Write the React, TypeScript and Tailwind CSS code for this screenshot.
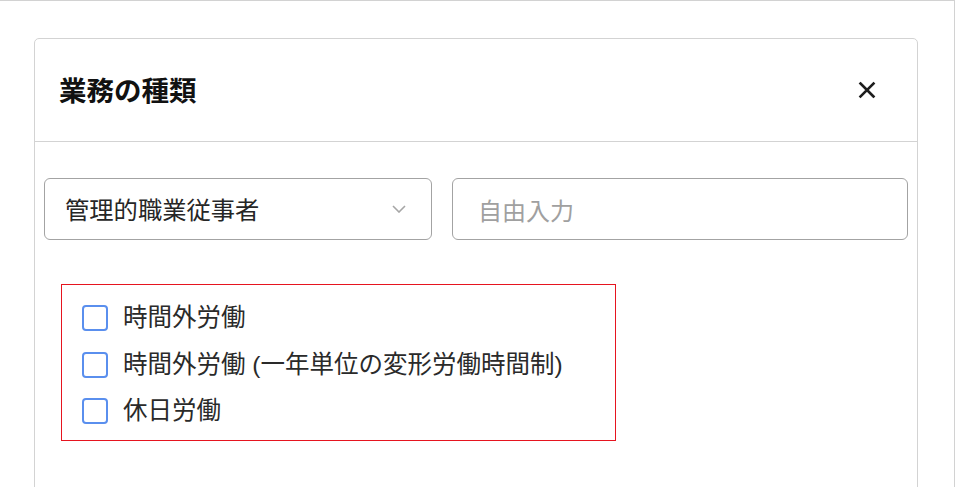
import React from 'react';

const OPTIONS = ['時間外労働', '時間外労働 (一年単位の変形労働時間制)', '休日労働'];

export default function App() {
  return (
    <div className="min-h-screen bg-white" style={{ fontFamily: '"Noto Sans CJK JP", "Noto Sans", sans-serif' }}>
      <div className="w-[955px] h-[487px] border-t-[1.5px] border-r border-[#d2d2d2] pt-[37px] pl-[34px] overflow-hidden">
        <div className="w-[884px] h-[500px] border border-[#d3d3d3] rounded-[5px] bg-white">
          {/* Header */}
          <div className="h-[103px] flex items-center justify-between pl-[24px] pr-[41px] border-b border-[#d3d3d3]">
            <h2 className="text-[27.5px] font-bold text-[#111] leading-none">業務の種類</h2>
            <button className="w-[18px] h-[18px] flex items-center justify-center">
              <svg width="18" height="18" viewBox="0 0 18 18" fill="none" stroke="#1e1e1e" strokeWidth="2.6" strokeLinecap="square">
                <path d="M2.5 2.5L15.5 15.5M15.5 2.5L2.5 15.5" />
              </svg>
            </button>
          </div>

          {/* Body */}
          <div className="px-[9px] pt-[36px]">
            <div className="flex gap-[20px]">
              <div className="w-[388px] h-[62px] border border-[#a3a3a3] rounded-[6px] pl-[20px] pr-[25px] flex items-center justify-between">
                <span className="text-[24.3px] text-[#262626]">管理的職業従事者</span>
                <svg width="14" height="8" viewBox="0 0 14 8" fill="none" stroke="#a6a6a6" strokeWidth="1.6">
                  <path d="M1 1l6 6 6-6" />
                </svg>
              </div>
              <input
                placeholder="自由入力"
                className="flex-1 h-[62px] border border-[#a3a3a3] rounded-[6px] pl-[25px] text-[24px] text-[#262626] placeholder:text-[#a0a0a0] outline-none"
              />
            </div>

            <div className="mt-[44px] ml-[17px] w-[555px] h-[157px] border-[1.5px] border-[#e6141f] pt-[10px] pl-[20px]">
              {OPTIONS.map((label) => (
                <label key={label} className="h-[46.5px] flex items-center gap-[15px]">
                  <span className="w-[26px] h-[26px] rounded-[4px] border-2 border-[#5a8fee] bg-white shrink-0" />
                  <span
                    className="text-[24.5px] text-[#2a2a2a] leading-none"
                    style={{ fontFamily: '"Liberation Sans", "Noto Sans CJK JP", sans-serif' }}
                  >
                    {label}
                  </span>
                </label>
              ))}
            </div>
          </div>
        </div>
      </div>
    </div>
  );
}
